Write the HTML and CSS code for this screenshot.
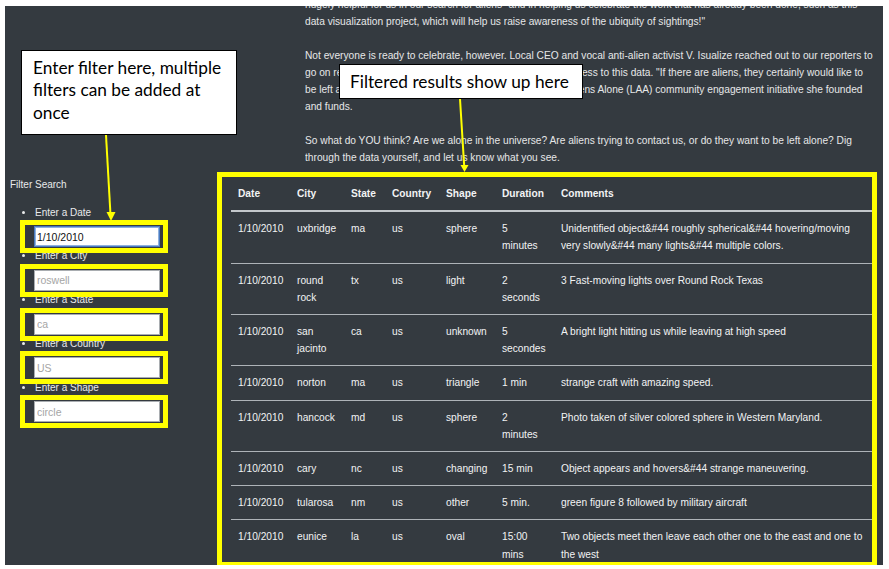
FILE: index.html
```html
<!DOCTYPE html>
<html lang="en">
<head>
<meta charset="utf-8">
<title>UFO Sightings</title>
<link rel="stylesheet" href="styles.css">
</head>
<body>
<div class="screen">
  <div class="intro">
    <div class="intro-text">
      <p>hugely helpful for us in our search for aliens" and in helping us celebrate the work that has already been done, such as this data visualization project, which will help us raise awareness of the ubiquity of sightings!"</p>
      <p>Not everyone is ready to celebrate, however. Local CEO and vocal anti-alien activist V. Isualize reached out to our reporters to go on record stating that the wider public should not have access to this data. "If there are aliens, they certainly would like to be left alone," she said, before pushing the grassroots Let Aliens Alone (LAA) community engagement initiative she founded and funds.</p>
      <p>So what do YOU think? Are we alone in the universe? Are aliens trying to contact us, or do they want to be left alone? Dig through the data yourself, and let us know what you see.</p>
    </div>
  </div>

  <div class="content-row">
    <aside class="filters">
      <div class="filters-title">Filter Search</div>
      <ul class="filter-list">
        <li class="filter-item">
          <label class="filter-label" for="f-date">Enter a Date</label>
          <div class="field-box"><input id="f-date" class="filter-input is-focused" type="text" value="1/10/2010"></div>
        </li>
        <li class="filter-item">
          <label class="filter-label" for="f-city">Enter a City</label>
          <div class="field-box"><input id="f-city" class="filter-input" type="text" placeholder="roswell"></div>
        </li>
        <li class="filter-item">
          <label class="filter-label" for="f-state">Enter a State</label>
          <div class="field-box"><input id="f-state" class="filter-input" type="text" placeholder="ca"></div>
        </li>
        <li class="filter-item">
          <label class="filter-label" for="f-country">Enter a Country</label>
          <div class="field-box"><input id="f-country" class="filter-input" type="text" placeholder="US"></div>
        </li>
        <li class="filter-item">
          <label class="filter-label" for="f-shape">Enter a Shape</label>
          <div class="field-box"><input id="f-shape" class="filter-input" type="text" placeholder="circle"></div>
        </li>
      </ul>
    </aside>

    <div class="results">
      <div class="results-clip">
        <table class="results-table">
          <thead>
            <tr>
              <th class="col-date">Date</th>
              <th class="col-city">City</th>
              <th class="col-state">State</th>
              <th class="col-country">Country</th>
              <th class="col-shape">Shape</th>
              <th class="col-duration">Duration</th>
              <th class="col-comments">Comments</th>
            </tr>
          </thead>
          <tbody>
            <tr><td>1/10/2010</td><td>uxbridge</td><td>ma</td><td>us</td><td>sphere</td><td class="cell-duration">5 minutes</td><td>Unidentified object&amp;#44 roughly spherical&amp;#44 hovering/moving very slowly&amp;#44 many lights&amp;#44 multiple colors.</td></tr>
            <tr><td>1/10/2010</td><td>round rock</td><td>tx</td><td>us</td><td>light</td><td class="cell-duration">2 seconds</td><td>3 Fast-moving lights over Round Rock Texas</td></tr>
            <tr><td>1/10/2010</td><td>san jacinto</td><td>ca</td><td>us</td><td>unknown</td><td class="cell-duration">5 secondes</td><td>A bright light hitting us while leaving at high speed</td></tr>
            <tr><td>1/10/2010</td><td>norton</td><td>ma</td><td>us</td><td>triangle</td><td class="cell-duration">1 min</td><td>strange craft with amazing speed.</td></tr>
            <tr><td>1/10/2010</td><td>hancock</td><td>md</td><td>us</td><td>sphere</td><td class="cell-duration">2 minutes</td><td>Photo taken of silver colored sphere in Western Maryland.</td></tr>
            <tr><td>1/10/2010</td><td>cary</td><td>nc</td><td>us</td><td>changing</td><td class="cell-duration">15 min</td><td>Object appears and hovers&amp;#44 strange maneuvering.</td></tr>
            <tr><td>1/10/2010</td><td>tularosa</td><td>nm</td><td>us</td><td>other</td><td class="cell-duration">5 min.</td><td>green figure 8 followed by military aircraft</td></tr>
            <tr><td>1/10/2010</td><td>eunice</td><td>la</td><td>us</td><td>oval</td><td class="cell-duration">15:00 mins</td><td>Two objects meet then leave each other one to the east and one to the west</td></tr>
          </tbody>
        </table>
      </div>
    </div>
  </div>

  <div class="callout callout-filter">Enter filter here, multiple filters can be added at once</div>
  <div class="callout callout-results">Filtered results show up here</div>

  <svg class="arrows" width="878" height="559" viewBox="0 0 878 559" aria-hidden="true">
    <line x1="101" y1="129" x2="105.4" y2="207" stroke="#ffff00" stroke-width="2"/>
    <polygon points="101.5,206 110.5,206 106,215" fill="#ffff00"/>
    <line x1="455" y1="93" x2="459.2" y2="160" stroke="#ffff00" stroke-width="2"/>
    <polygon points="455.5,159 463.5,159 459.5,166" fill="#ffff00"/>
  </svg>
</div>
</body>
</html>
```

FILE: styles.css
```css
html, body {
  margin: 0;
  padding: 0;
  background: #ffffff;
}

body {
  font-family: "Liberation Sans", Arial, sans-serif;
}

.screen {
  position: relative;
  margin: 6px 0 0 5px;
  width: 878px;
  height: 559px;
  background: #343a40;
  color: #e6e7e8;
  display: flex;
  flex-direction: column;
}

/* ---------- intro text ---------- */
.intro {
  flex: none;
  overflow: hidden;
  margin: 0 8px 11.5px 300px;
}

.intro-text {
  margin-top: -10.5px;
  font-size: 10.2px;
  line-height: 17px;
}

.intro-text p {
  margin: 0 0 17px;
}

.intro-text p:last-child {
  margin-bottom: 0;
}

/* ---------- content row ---------- */
.content-row {
  flex: 1;
  min-height: 0;
  display: grid;
  grid-template-columns: 226px 1fr;
  padding-right: 11px;
}

/* ---------- filters ---------- */
.filters {
  padding-left: 5px;
  font-size: 10px;
  color: #e9eaeb;
}

.filters-title {
  line-height: 15px;
  margin-bottom: 11.5px;
}

.filter-list {
  margin: 0;
  padding-left: 25px;
  list-style: disc;
}

.filter-item {
  margin-bottom: 0.25px;
}

.filter-label {
  display: block;
  line-height: 17px;
  margin-bottom: 5.5px;
}

.field-box {
  position: relative;
  width: 126px;
  height: 21px;
  margin-left: -1px;
}

.field-box::after {
  content: "";
  position: absolute;
  top: -6px;
  left: -14px;
  right: -8px;
  bottom: -6px;
  border: 5px solid #ffff00;
  pointer-events: none;
}

.filter-input {
  box-sizing: border-box;
  display: block;
  width: 100%;
  height: 100%;
  margin: 0;
  padding: 0 2px;
  border: 1px solid #a9adb1;
  border-radius: 0;
  background: #ffffff;
  font-family: "Liberation Sans", Arial, sans-serif;
  font-size: 10.5px;
  color: #111111;
  outline: none;
}

.filter-input::placeholder {
  color: #a5a5a5;
}

.filter-input.is-focused {
  border-color: #4a7bc0;
  box-shadow: inset 0 0 0 1px #8fb0dd;
}

/* ---------- results ---------- */
.results {
  position: relative;
  min-height: 0;
}

.results::after {
  content: "";
  position: absolute;
  top: -5px;
  left: -14px;
  right: -5px;
  bottom: -2px;
  border: 5px solid #ffff00;
  pointer-events: none;
}

.results-clip {
  height: 100%;
  overflow: hidden;
}

.results-table {
  width: 100%;
  table-layout: fixed;
  border-collapse: separate;
  border-spacing: 0;
  font-size: 10.2px;
  line-height: 17.2px;
  color: #f2f3f4;
}

.results-table th,
.results-table td {
  box-sizing: border-box;
  padding: 8px 7px;
  text-align: left;
  vertical-align: top;
}

.results-table th {
  font-weight: bold;
  border-bottom: 2px solid #c3c7cb;
}

.results-table td {
  border-top: 1px solid #aeb3b8;
}

.results-table tbody tr:first-child td {
  border-top: none;
}

.col-date { width: 59px; }
.col-city { width: 54px; }
.col-state { width: 41px; }
.col-country { width: 54px; }
.col-shape { width: 56px; }
.col-duration { width: 59px; }

.results-table .col-duration,
.results-table .cell-duration {
  padding-right: 10px;
}

/* ---------- annotations ---------- */
.callout {
  position: absolute;
  box-sizing: border-box;
  background: #ffffff;
  border: 1px solid #000000;
  color: #000000;
  font-family: Lato, "Open Sans", sans-serif;
  font-size: 17.3px;
  line-height: 22.5px;
}

.callout-filter {
  left: 16px;
  top: 44px;
  width: 216px;
  height: 85px;
  padding: 5.75px 8px 0 11px;
}

.callout-results {
  left: 334px;
  top: 58px;
  width: 244px;
  height: 35px;
  padding: 5.75px 0 0 10px;
  white-space: nowrap;
}

.arrows {
  position: absolute;
  left: 0;
  top: 0;
  overflow: visible;
  pointer-events: none;
}
```
